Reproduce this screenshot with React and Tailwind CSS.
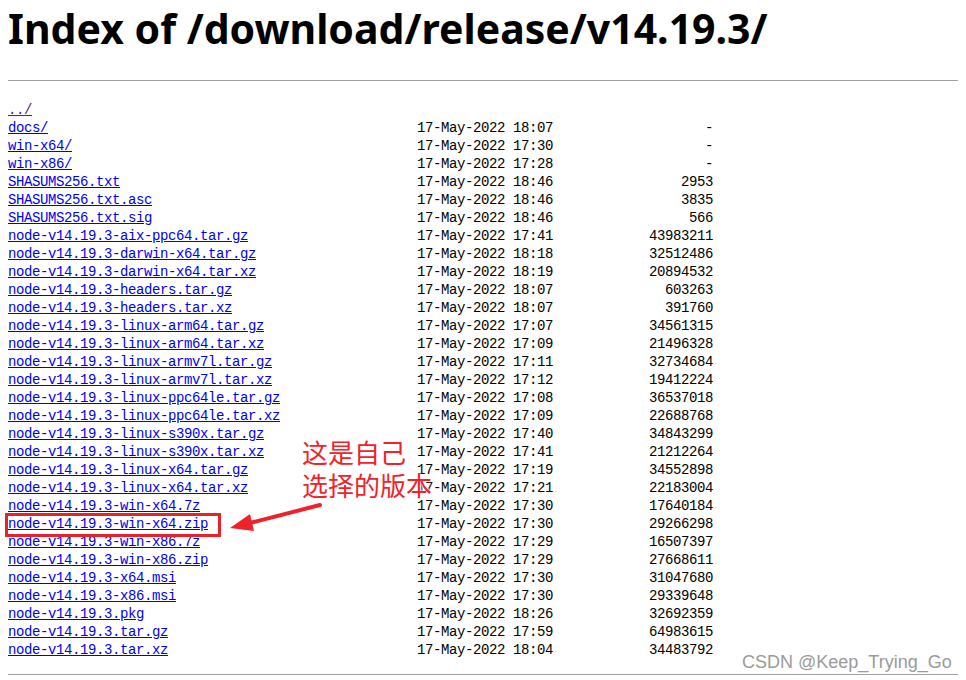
import React from 'react';

const rows = [
  ['../', '', '', true],
  ['docs/', '17-May-2022 18:07', '-'],
  ['win-x64/', '17-May-2022 17:30', '-'],
  ['win-x86/', '17-May-2022 17:28', '-'],
  ['SHASUMS256.txt', '17-May-2022 18:46', '2953'],
  ['SHASUMS256.txt.asc', '17-May-2022 18:46', '3835'],
  ['SHASUMS256.txt.sig', '17-May-2022 18:46', '566'],
  ['node-v14.19.3-aix-ppc64.tar.gz', '17-May-2022 17:41', '43983211'],
  ['node-v14.19.3-darwin-x64.tar.gz', '17-May-2022 18:18', '32512486'],
  ['node-v14.19.3-darwin-x64.tar.xz', '17-May-2022 18:19', '20894532'],
  ['node-v14.19.3-headers.tar.gz', '17-May-2022 18:07', '603263'],
  ['node-v14.19.3-headers.tar.xz', '17-May-2022 18:07', '391760'],
  ['node-v14.19.3-linux-arm64.tar.gz', '17-May-2022 17:07', '34561315'],
  ['node-v14.19.3-linux-arm64.tar.xz', '17-May-2022 17:09', '21496328'],
  ['node-v14.19.3-linux-armv7l.tar.gz', '17-May-2022 17:11', '32734684'],
  ['node-v14.19.3-linux-armv7l.tar.xz', '17-May-2022 17:12', '19412224'],
  ['node-v14.19.3-linux-ppc64le.tar.gz', '17-May-2022 17:08', '36537018'],
  ['node-v14.19.3-linux-ppc64le.tar.xz', '17-May-2022 17:09', '22688768'],
  ['node-v14.19.3-linux-s390x.tar.gz', '17-May-2022 17:40', '34843299'],
  ['node-v14.19.3-linux-s390x.tar.xz', '17-May-2022 17:41', '21212264'],
  ['node-v14.19.3-linux-x64.tar.gz', '17-May-2022 17:19', '34552898'],
  ['node-v14.19.3-linux-x64.tar.xz', '17-May-2022 17:21', '22183004'],
  ['node-v14.19.3-win-x64.7z', '17-May-2022 17:30', '17640184'],
  ['node-v14.19.3-win-x64.zip', '17-May-2022 17:30', '29266298'],
  ['node-v14.19.3-win-x86.7z', '17-May-2022 17:29', '16507397'],
  ['node-v14.19.3-win-x86.zip', '17-May-2022 17:29', '27668611'],
  ['node-v14.19.3-x64.msi', '17-May-2022 17:30', '31047680'],
  ['node-v14.19.3-x86.msi', '17-May-2022 17:30', '29339648'],
  ['node-v14.19.3.pkg', '17-May-2022 18:26', '32692359'],
  ['node-v14.19.3.tar.gz', '17-May-2022 17:59', '64983615'],
  ['node-v14.19.3.tar.xz', '17-May-2022 18:04', '34483792'],
];

export default function App() {
  return (
    <div className="relative min-h-[680px] bg-white px-2 text-black">
      <h1 className="text-[41px] font-bold leading-[56px] font-['Noto_Sans','Liberation_Sans',sans-serif]">
        Index of /download/release/v14.19.3/
      </h1>
      <div className="mt-[24px] h-px bg-[#a0a0a0]" />

      {/* listing */}
      <div className="mt-[20px] font-['Liberation_Mono','Noto_Sans_CJK_SC',monospace] text-[14px] leading-[18px] tracking-[-0.4px]">
        {rows.map(([name, date, size, visited]) => (
          <div key={name} className="flex h-[18px] whitespace-pre">
            <div className="w-[409px]">
              <a href="#" className={visited ? 'text-[#551a8b] underline' : 'text-[#0000ee] underline'}>
                {name}
              </a>
            </div>
            <div className="w-[136px]">{date}</div>
            <div className="w-[160px] text-right">{size}</div>
          </div>
        ))}
      </div>
      <div className="mt-[15px] h-px bg-[#a0a0a0]" />

      {/* annotation */}
      <div className="absolute left-[302px] top-[435px] text-[26px] leading-[33px] text-[#f0222a] font-['Noto_Sans_CJK_SC',sans-serif] [text-shadow:0_0_2px_#fff,0_0_3px_#fff]">
        <div>这是自己</div>
        <div>选择的版本</div>
      </div>
      <div className="absolute left-[5px] top-[513px] h-[24px] w-[216px] border-[3px] border-[#e8212a]" />
      <svg className="absolute left-[226px] top-[500px]" width="100" height="34" viewBox="0 0 100 34">
        <line x1="94" y1="5" x2="20" y2="24" stroke="#ee2229" strokeWidth="4" strokeLinecap="round" />
        <polygon points="4,28 24,14 28,31" fill="#ee2229" />
      </svg>

      {/* watermark */}
      <div className="absolute left-[742px] top-[649px] text-[18px] text-[#9a9a9a] font-['Liberation_Sans',sans-serif] [text-shadow:0_0_1px_#fff]">
        CSDN @Keep_Trying_Go
      </div>
    </div>
  );
}
